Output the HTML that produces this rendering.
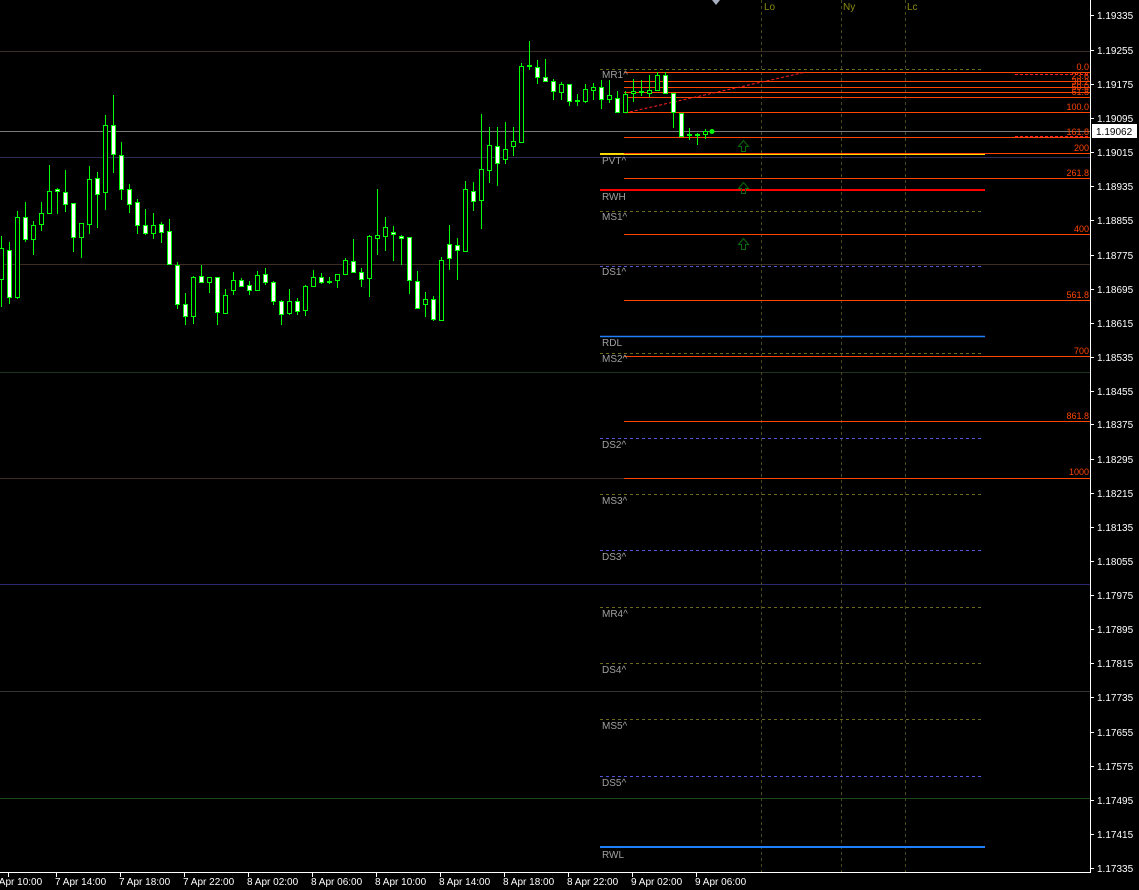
<!DOCTYPE html>
<html><head><meta charset="utf-8"><style>
html,body{margin:0;padding:0;background:#000;}
svg{display:block;font-family:"Liberation Sans",sans-serif;}
</style></head><body>
<svg width="1139" height="890" viewBox="0 0 1139 890" xmlns="http://www.w3.org/2000/svg">
<rect width="1139" height="890" fill="#000"/>
<!-- full-width level lines -->
<g stroke-width="1" fill="none">
<path d="M0 51.5H1090" stroke="#3c2c22"/>
<path d="M0 157.5H1090" stroke="#2e2c52"/>
<path d="M0 264.5H1090" stroke="#3c2c22"/>
<path d="M0 372.5H1090" stroke="#1c3420"/>
<path d="M0 478.5H1090" stroke="#3c2c22"/>
<path d="M0 584.5H1090" stroke="#2a2a72"/>
<path d="M0 691.5H1090" stroke="#333"/>
<path d="M0 798.5H1090" stroke="#1a4a1a"/>
<path d="M0 131.5H1090" stroke="#7a7a7a"/>
</g>
<!-- session verticals -->
<g stroke="#4a4a1a" stroke-dasharray="3,3">
<path d="M761.5 0V872M841.5 0V872M905.5 0V872"/>
</g>
<g fill="#8b8b10" font-size="10">
<text x="764" y="10">Lo</text><text x="843" y="10">Ny</text><text x="907" y="10">Lc</text>
</g>
<!-- level lines -->
<g fill="none">
<g stroke="#6a6a1a" stroke-dasharray="3,3">
<path d="M600 69.5H981M600 211.5H981M600 353.5H981M600 494.5H981M600 607.5H981M600 663.5H981M600 719.5H981"/>
</g>
<g stroke="#5454d8" stroke-dasharray="3,3">
<path d="M600 266.5H981M600 438.5H981M600 550.5H981M600 776.5H981"/>
</g>
<path d="M600 154H985" stroke="#ffd700" stroke-width="2"/>
<path d="M600 190H985" stroke="#ff0000" stroke-width="2"/>
<path d="M600 336.5H985" stroke="#1e7fff" stroke-width="1.5"/>
<path d="M600 847H985" stroke="#1e7fff" stroke-width="2"/>
<g stroke="#ff4500">
<path d="M624 72.5H1090M624 81.5H1090M624 87.5H1090M624 92.5H1090M624 97.5H1090M624 112.5H1090M624 137.5H1090M624 153.5H1090M624 178.5H1090M624 234.5H1090M624 300.5H1090M624 356.5H1090M624 421.5H1090M624 478.5H1090"/>
</g>
<g stroke="#ff2020" stroke-dasharray="3,2">
<path d="M1015 74.5H1090M1015 136.5H1090M625 113L806 72"/>
</g>
</g>
<g fill="#ff4500" font-size="9" text-anchor="end">
<text x="1089" y="70">0.0</text>
<text x="1089" y="79">23.6</text>
<text x="1089" y="85">38.2</text>
<text x="1089" y="90">50.0</text>
<text x="1089" y="95">61.8</text>
<text x="1089" y="110">100.0</text>
<text x="1089" y="135">161.8</text>
<text x="1089" y="151">200</text>
<text x="1089" y="176">261.8</text>
<text x="1089" y="232">400</text>
<text x="1089" y="298">561.8</text>
<text x="1089" y="354">700</text>
<text x="1089" y="419">861.8</text>
<text x="1089" y="475">1000</text>
</g>
<g fill="#a0a0a0" font-size="10">
<text x="602" y="78">MR1^</text>
<text x="602" y="164">PVT^</text>
<text x="602" y="200">RWH</text>
<text x="602" y="220">MS1^</text>
<text x="602" y="275">DS1^</text>
<text x="602" y="346">RDL</text>
<text x="602" y="362">MS2^</text>
<text x="602" y="448">DS2^</text>
<text x="602" y="504">MS3^</text>
<text x="602" y="560">DS3^</text>
<text x="602" y="617">MR4^</text>
<text x="602" y="673">DS4^</text>
<text x="602" y="729">MS5^</text>
<text x="602" y="786">DS5^</text>
<text x="602" y="858">RWL</text>
</g>
<!-- arrows -->
<g fill="none" stroke="#0a6a0a" stroke-width="1">
<path d="M743.5 140.5L738.5 146.5H741.5V151.5H745.5V146.5H748.5Z"/>
<path d="M743.5 182.5L738.5 188.5H741.5V193.5H745.5V188.5H748.5Z"/>
<path d="M743.5 238.5L738.5 244.5H741.5V249.5H745.5V244.5H748.5Z"/>
</g>
<!-- candles -->
<path fill="none" stroke="#00ff00" d="M1.5 236V307M9.5 242V304M17.5 211V299M25.5 202V242M33.5 221V255M41.5 202V231M49.5 165V213M57.5 188V214M65.5 170V212M73.5 203V252M81.5 223V258M89.5 166V234M97.5 172V228M105.5 115V210M113.5 95V173M121.5 142V200M129.5 184V213M137.5 199V234M145.5 209V235M153.5 213V239M161.5 222V243M169.5 219V265M177.5 262V309M185.5 293V325M193.5 276V324M201.5 265V282M209.5 277V293M217.5 277V325M225.5 289V313M233.5 272V295M241.5 278V287M249.5 281V295M257.5 271V291M265.5 268V285M273.5 281V305M281.5 300V325M289.5 289V315M297.5 298V315M305.5 285V316M313.5 270V287M321.5 273V284M329.5 277V284M337.5 274V288M345.5 258V275M353.5 239V272M361.5 268V287M369.5 235V297M377.5 189V255M385.5 217V251M393.5 226V261M401.5 235V265M409.5 237V294M417.5 271V309M425.5 292V317M433.5 296V321M441.5 257V321M449.5 225V270M457.5 238V280M465.5 181V252M473.5 182V211M481.5 114V229M489.5 127V183M497.5 127V186M505.5 122V164M513.5 127V156M521.5 63V143M529.5 41V70M537.5 60V84M545.5 59V81M553.5 79V100M561.5 82V100M569.5 84V106M577.5 94V106M585.5 84V103M593.5 83V100M601.5 80V109M609.5 80V103M617.5 91V112M625.5 91V113M633.5 79V102M641.5 80V96M649.5 75V97M657.5 72V91M665.5 72V94M673.5 93V128M681.5 113V137M689.5 128V140M697.5 133V145M705.5 129V139"/>
<g stroke="#00ff00" stroke-width="1">
<g fill="#000">
<rect x="-0.5" y="248.5" width="4" height="31"/>
<rect x="15.5" y="217.5" width="4" height="80"/>
<rect x="31.5" y="225.5" width="4" height="14"/>
<rect x="39.5" y="213.5" width="4" height="11"/>
<rect x="47.5" y="191.5" width="4" height="22"/>
<rect x="79.5" y="223.5" width="4" height="14"/>
<rect x="87.5" y="179.5" width="4" height="45"/>
<rect x="103.5" y="125.5" width="4" height="67"/>
<rect x="151.5" y="225.5" width="4" height="8"/>
<rect x="191.5" y="277.5" width="4" height="39"/>
<rect x="207.5" y="277.5" width="4" height="5"/>
<rect x="223.5" y="295.5" width="4" height="18"/>
<rect x="231.5" y="280.5" width="4" height="10"/>
<rect x="255.5" y="275.5" width="4" height="15"/>
<rect x="287.5" y="301.5" width="4" height="12"/>
<rect x="303.5" y="286.5" width="4" height="24"/>
<rect x="311.5" y="277.5" width="4" height="9"/>
<rect x="327.5" y="281.5" width="4" height="1"/>
<rect x="335.5" y="274.5" width="4" height="6"/>
<rect x="343.5" y="260.5" width="4" height="14"/>
<rect x="367.5" y="236.5" width="4" height="42"/>
<rect x="375.5" y="235.5" width="4" height="3"/>
<rect x="383.5" y="227.5" width="4" height="9"/>
<rect x="423.5" y="299.5" width="4" height="5"/>
<rect x="439.5" y="260.5" width="4" height="60"/>
<rect x="463.5" y="189.5" width="4" height="62"/>
<rect x="479.5" y="169.5" width="4" height="31"/>
<rect x="487.5" y="145.5" width="4" height="25"/>
<rect x="503.5" y="149.5" width="4" height="10"/>
<rect x="511.5" y="141.5" width="4" height="5"/>
<rect x="519.5" y="66.5" width="4" height="76"/>
<rect x="527.5" y="65.5" width="4" height="1"/>
<rect x="559.5" y="84.5" width="4" height="8"/>
<rect x="575.5" y="100.5" width="4" height="1"/>
<rect x="583.5" y="89.5" width="4" height="12"/>
<rect x="591.5" y="87.5" width="4" height="3"/>
<rect x="607.5" y="95.5" width="4" height="4"/>
<rect x="623.5" y="94.5" width="4" height="18"/>
<rect x="631.5" y="91.5" width="4" height="2"/>
<rect x="639.5" y="91.5" width="4" height="1"/>
<rect x="647.5" y="90.5" width="4" height="3"/>
<rect x="655.5" y="75.5" width="4" height="15"/>
<rect x="687.5" y="134.5" width="4" height="1"/>
<rect x="695.5" y="134.5" width="4" height="1"/>
<rect x="703.5" y="131.5" width="4" height="3"/>
</g>
<g fill="#fff">
<rect x="7.5" y="250.5" width="4" height="47"/>
<rect x="23.5" y="217.5" width="4" height="22"/>
<rect x="55.5" y="189.5" width="4" height="2"/>
<rect x="63.5" y="192.5" width="4" height="12"/>
<rect x="71.5" y="203.5" width="4" height="34"/>
<rect x="95.5" y="178.5" width="4" height="16"/>
<rect x="111.5" y="125.5" width="4" height="29"/>
<rect x="119.5" y="155.5" width="4" height="34"/>
<rect x="127.5" y="189.5" width="4" height="15"/>
<rect x="135.5" y="202.5" width="4" height="23"/>
<rect x="143.5" y="225.5" width="4" height="8"/>
<rect x="159.5" y="224.5" width="4" height="8"/>
<rect x="167.5" y="231.5" width="4" height="33"/>
<rect x="175.5" y="265.5" width="4" height="39"/>
<rect x="183.5" y="304.5" width="4" height="12"/>
<rect x="199.5" y="276.5" width="4" height="6"/>
<rect x="215.5" y="277.5" width="4" height="35"/>
<rect x="239.5" y="280.5" width="4" height="6"/>
<rect x="247.5" y="285.5" width="4" height="5"/>
<rect x="263.5" y="274.5" width="4" height="8"/>
<rect x="271.5" y="282.5" width="4" height="19"/>
<rect x="279.5" y="301.5" width="4" height="13"/>
<rect x="295.5" y="301.5" width="4" height="10"/>
<rect x="319.5" y="277.5" width="4" height="5"/>
<rect x="351.5" y="261.5" width="4" height="11"/>
<rect x="359.5" y="272.5" width="4" height="7"/>
<rect x="391.5" y="232.5" width="4" height="2"/>
<rect x="399.5" y="236.5" width="4" height="2"/>
<rect x="407.5" y="237.5" width="4" height="43"/>
<rect x="415.5" y="281.5" width="4" height="27"/>
<rect x="431.5" y="299.5" width="4" height="20"/>
<rect x="447.5" y="244.5" width="4" height="14"/>
<rect x="455.5" y="245.5" width="4" height="5"/>
<rect x="471.5" y="191.5" width="4" height="10"/>
<rect x="495.5" y="146.5" width="4" height="17"/>
<rect x="535.5" y="67.5" width="4" height="10"/>
<rect x="543.5" y="77.5" width="4" height="4"/>
<rect x="551.5" y="81.5" width="4" height="10"/>
<rect x="567.5" y="84.5" width="4" height="17"/>
<rect x="599.5" y="87.5" width="4" height="12"/>
<rect x="615.5" y="98.5" width="4" height="14"/>
<rect x="663.5" y="75.5" width="4" height="18"/>
<rect x="671.5" y="93.5" width="4" height="19"/>
<rect x="679.5" y="113.5" width="4" height="23"/>
</g>
</g>
<circle cx="712" cy="131.5" r="2.5" fill="#00ff00"/>
<path d="M712 0L716 5L720 0Z" fill="#a8b0c0"/>
<!-- axes -->
<path d="M1090.5 0V873M0 872.5H1091" stroke="#fff" fill="none"/>
<g stroke="#fff">
<path d="M1091 15.5h3M1091 50.5h3M1091 84.5h3M1091 118.5h3M1091 152.5h3M1091 186.5h3M1091 220.5h3M1091 255.5h3M1091 289.5h3M1091 323.5h3M1091 357.5h3M1091 391.5h3M1091 424.5h3M1091 459.5h3M1091 493.5h3M1091 527.5h3M1091 561.5h3M1091 595.5h3M1091 629.5h3M1091 663.5h3M1091 697.5h3M1091 732.5h3M1091 766.5h3M1091 800.5h3M1091 834.5h3M1091 868.5h3"/>
<path d="M8.5 873v4M56.5 873v4M120.5 873v4M184.5 873v4M248.5 873v4M312.5 873v4M376.5 873v4M440.5 873v4M504.5 873v4M568.5 873v4M632.5 873v4M696.5 873v4"/>
</g>
<g fill="#fff" font-size="10">
<text x="1097" y="19">1.19335</text>
<text x="1097" y="54">1.19255</text>
<text x="1097" y="88">1.19175</text>
<text x="1097" y="122">1.19095</text>
<text x="1097" y="156">1.19015</text>
<text x="1097" y="190">1.18935</text>
<text x="1097" y="224">1.18855</text>
<text x="1097" y="259">1.18775</text>
<text x="1097" y="293">1.18695</text>
<text x="1097" y="327">1.18615</text>
<text x="1097" y="361">1.18535</text>
<text x="1097" y="395">1.18455</text>
<text x="1097" y="428">1.18375</text>
<text x="1097" y="463">1.18295</text>
<text x="1097" y="497">1.18215</text>
<text x="1097" y="531">1.18135</text>
<text x="1097" y="565">1.18055</text>
<text x="1097" y="599">1.17975</text>
<text x="1097" y="633">1.17895</text>
<text x="1097" y="667">1.17815</text>
<text x="1097" y="701">1.17735</text>
<text x="1097" y="736">1.17655</text>
<text x="1097" y="770">1.17575</text>
<text x="1097" y="804">1.17495</text>
<text x="1097" y="838">1.17415</text>
<text x="1097" y="872">1.17335</text>
</g>
<rect x="1092" y="124" width="45" height="14" fill="#fff"/>
<text x="1096" y="135" fill="#000" font-size="10">1.19062</text>
<g fill="#fff" font-size="10">
<text x="-9" y="885">7 Apr 10:00</text>
<text x="55" y="885">7 Apr 14:00</text>
<text x="119" y="885">7 Apr 18:00</text>
<text x="183" y="885">7 Apr 22:00</text>
<text x="247" y="885">8 Apr 02:00</text>
<text x="311" y="885">8 Apr 06:00</text>
<text x="375" y="885">8 Apr 10:00</text>
<text x="439" y="885">8 Apr 14:00</text>
<text x="503" y="885">8 Apr 18:00</text>
<text x="567" y="885">8 Apr 22:00</text>
<text x="631" y="885">9 Apr 02:00</text>
<text x="695" y="885">9 Apr 06:00</text>
</g>
</svg>
</body></html>
